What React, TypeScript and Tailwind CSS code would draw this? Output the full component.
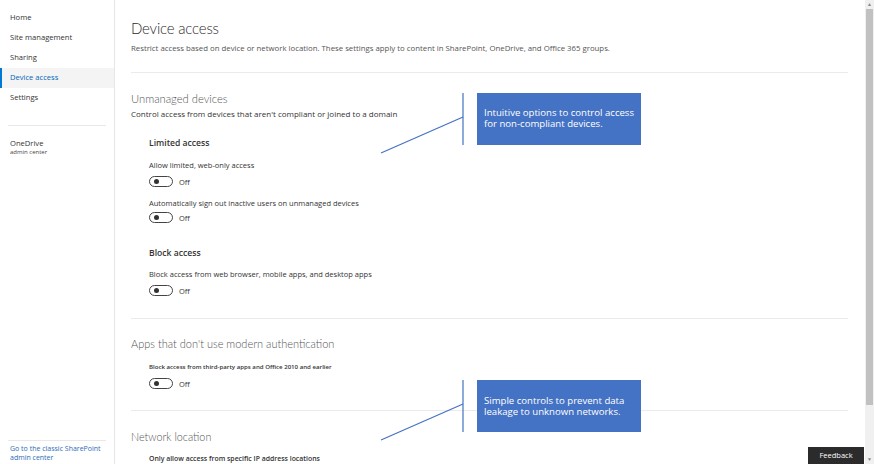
import React from "react";

const font = { fontFamily: '"Open Sans", "Noto Sans", Arial, sans-serif' };
const headFont = { fontFamily: 'Lato, "Open Sans", Arial, sans-serif' };

function Toggle({ className = "" }: { className?: string }) {
  return (
    <div className={`flex items-center gap-[6px] ${className}`}>
      <div className="flex h-[11px] w-[24px] items-center rounded-full border border-[#444] pl-[4px]">
        <div className="h-[5px] w-[5px] rounded-full bg-[#333]" />
      </div>
      <span className="text-[7.5px] leading-[10px] text-[#333]">Off</span>
    </div>
  );
}

function Callout({ top, pt, text }: { top: number; pt: number; text: string }) {
  return (
    <div className="absolute left-[380px]" style={{ top }}>
      <svg width="100" height="62" className="absolute left-0 top-0">
        <line x1="83" y1="0" x2="83" y2="52" stroke="#4472c4" strokeWidth="1.2" />
        <line x1="1" y1="60" x2="83" y2="24" stroke="#4472c4" strokeWidth="1.2" />
      </svg>
      <div
        className="absolute left-[97px] top-0 h-[52px] w-[164px] bg-[#4472c4] pl-[7px] pr-[2px] text-[9.6px] leading-[11px] text-white"
        style={{ paddingTop: pt }}
      >
        {text}
      </div>
    </div>
  );
}

export default function App() {
  const nav = ["Home", "Site management", "Sharing", "Device access", "Settings"];
  return (
    <div className="relative flex h-[464px] w-[874px] overflow-hidden bg-white" style={font}>
      {/* Sidebar */}
      <div className="flex w-[115px] shrink-0 flex-col justify-between border-r border-[#e6e6e6]">
        <div className="pt-[8px]">
          {nav.map((n) => {
            const sel = n === "Device access";
            return (
              <div
                key={n}
                className={
                  sel
                    ? "flex h-[20px] items-center border-l-2 border-[#0078d4] bg-[#f4f4f4] pl-[8px] text-[7.6px] text-[#0068b8]"
                    : "flex h-[20px] items-center pl-[10px] text-[7.6px] text-[#333]"
                }
              >
                {n}
              </div>
            );
          })}
          <div className="mx-[8px] mt-[17px] border-t border-[#e8e8e8]" />
          <div className="pl-[10px] pt-[12px] text-[7.6px] leading-[10px] text-[#333]">OneDrive</div>
          <div className="pl-[10px] text-[6px] leading-[8px] text-[#444]">admin center</div>
        </div>
        <div className="pb-[2px]">
          <div className="mx-[8px] border-t border-[#e8e8e8]" />
          <div className="pl-[10px] pt-[3px] text-[7px] leading-[9px] text-[#2b6cb8]">
            Go to the classic SharePoint
            <br />
            admin center
          </div>
        </div>
      </div>

      {/* Main */}
      <div className="relative flex-1 pl-[16px] pr-[17px] text-[#333]">
        <div
          className="pt-[18px] text-[15px] font-light leading-[20px] tracking-[-0.2px] text-[#2b2b2b]"
          style={headFont}
        >
          Device access
        </div>
        <div className="mt-[5px] text-[7.8px] leading-[11px] text-[#555]">
          Restrict access based on device or network location. These settings apply to content in SharePoint, OneDrive, and Office 365 groups.
        </div>
        <div className="mt-[18px] border-t border-[#ebebeb]" />

        <div className="mt-[18px] text-[11.2px] font-light leading-[16px] text-[#555]" style={headFont}>
          Unmanaged devices
        </div>
        <div className="mt-[1px] text-[8px] leading-[11px] text-[#333]">
          Control access from devices that aren't compliant or joined to a domain
        </div>
        <div className="pl-[18px]">
          <div className="mt-[18px] text-[8.6px] font-semibold leading-[12px] text-[#333]">Limited access</div>
          <div className="mt-[11px] text-[7.5px] leading-[10px]">Allow limited, web-only access</div>
          <Toggle className="mt-[6px]" />
          <div className="mt-[11px] text-[7.5px] leading-[10px]">
            Automatically sign out inactive users on unmanaged devices
          </div>
          <Toggle className="mt-[4px]" />
          <div className="mt-[24px] text-[8.6px] font-semibold leading-[12px] text-[#333]">Block access</div>
          <div className="mt-[10px] text-[7.5px] leading-[10px]">
            Block access from web browser, mobile apps, and desktop apps
          </div>
          <Toggle className="mt-[6px]" />
        </div>
        <div className="mt-[22px] border-t border-[#ebebeb]" />

        <div className="mt-[17px] text-[11px] font-light leading-[16px] text-[#555]" style={headFont}>
          Apps that don't use modern authentication
        </div>
        <div className="pl-[18px]">
          <div className="mt-[10px] text-[6.1px] font-semibold leading-[10px]">
            Block access from third-party apps and Office 2010 and earlier
          </div>
          <Toggle className="mt-[6px]" />
        </div>
        <div className="mt-[21px] border-t border-[#ebebeb]" />

        <div className="mt-[18px] text-[10.8px] font-light leading-[16px] text-[#555]" style={headFont}>
          Network location
        </div>
        <div className="pl-[18px]">
          <div className="mt-[9px] text-[6.9px] font-semibold leading-[10px]">
            Only allow access from specific IP address locations
          </div>
        </div>
      </div>

      {/* Scrollbar */}
      <div className="flex w-[9px] shrink-0 flex-col bg-[#f0f0f0]">
        <div className="flex h-[9px] items-center justify-center text-[5px] leading-none text-[#888]">▲</div>
        <div className="mx-[1px] h-[396px] bg-[#c1c1c1]" />
        <div className="flex-1" />
        <div className="flex h-[9px] items-center justify-center text-[5px] leading-none text-[#888]">▼</div>
      </div>

      {/* Overlays */}
      <Callout top={93} pt={14} text="Intuitive options to control access for non-compliant devices." />
      <Callout top={380} pt={15} text="Simple controls to prevent data leakage to unknown networks." />
      <div className="absolute left-[808px] top-[447px] flex h-[17px] w-[56px] items-center justify-center bg-[#2b2b2b] text-[7.5px] text-white">
        Feedback
      </div>
    </div>
  );
}
